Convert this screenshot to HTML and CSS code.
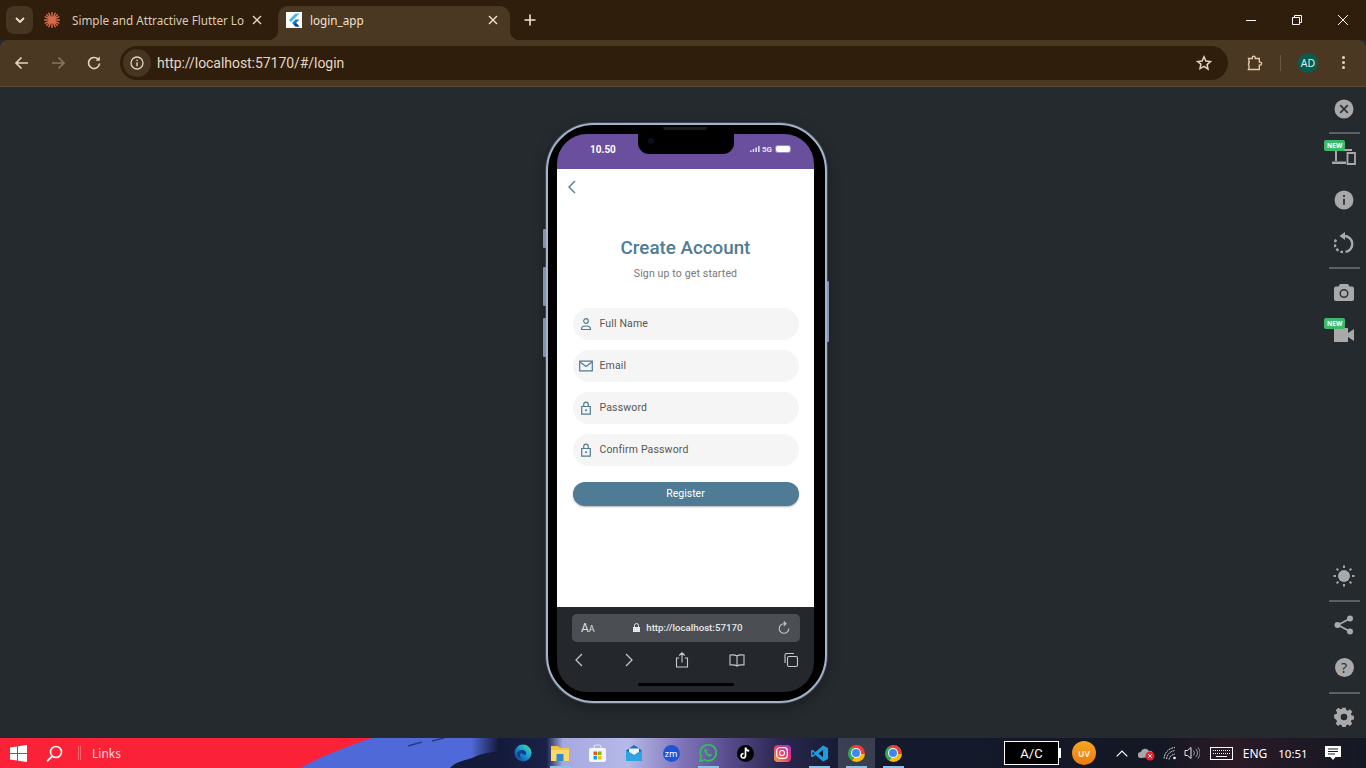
FILE: index.html
```html
<!DOCTYPE html>
<html lang="en">
<head>
    <meta charset="UTF-8">
    <meta name="viewport" content="width=device-width, initial-scale=1.0">
    <title>login_app</title>
    <link rel="stylesheet" href="styles.css">
</head>
<body>
    <!-- browser chrome -->
    <div class="tabstrip">
        <div class="tab-search">
            <svg width="10" height="6" viewBox="0 0 10 6"><path d="M1 1l4 4 4-4" fill="none" stroke="#f0e4d4" stroke-width="1.8"/></svg>
        </div>
        <div class="tab">
            <svg class="tab-icon" width="16" height="16" viewBox="0 0 16 16"><g stroke="#d9694a" stroke-width="1.4" stroke-linecap="round"><path d="M8 0.500v15M0.500 8h15M2.700 2.700l10.600 10.600M13.300 2.700L2.700 13.300M4.800 1.200l6.400 13.600M11.200 1.200L4.800 14.800M1.200 4.800l13.600 6.400M14.800 4.800L1.200 11.200"/></g></svg>
            <span class="tab-title">Simple and Attractive Flutter Lo</span>
            <span class="tab-close">
                <svg width="10" height="10" viewBox="0 0 10 10"><path d="M1 1l8 8M9 1L1 9" stroke="#e6d6c0" stroke-width="1.4"/></svg>
            </span>
        </div>
        <div class="tab tab-active">
            <span class="favicon">
                <svg width="16" height="16" viewBox="0 0 16 16"><path d="M9.500 1.500L3 8l2 2 8.500-8.500z" fill="#42b9f2"/><path d="M9.500 7.500L6 11l3.500 3.500h4L10 11l3.500-3.500z" fill="#1f74d2"/><path d="M8 12.500l1.500 2h4L10 11z" fill="#0b3f8f"/></svg>
            </span>
            <span class="tab-title">login_app</span>
            <span class="tab-close">
                <svg width="10" height="10" viewBox="0 0 10 10"><path d="M1 1l8 8M9 1L1 9" stroke="#f0e4d4" stroke-width="1.4"/></svg>
            </span>
        </div>
        <div class="new-tab">
            <svg width="12" height="12" viewBox="0 0 12 12"><path d="M6 0.500v11M0.500 6h11" stroke="#f0e4d4" stroke-width="1.600"/></svg>
        </div>
        <div class="win-controls">
            <span class="win-btn"><svg width="12" height="12" viewBox="0 0 12 12"><path d="M1 6.500h10" stroke="#fff" stroke-width="1"/></svg></span>
            <span class="win-btn"><svg width="12" height="12" viewBox="0 0 12 12"><path d="M1.500 3.500h7v7h-7zM3.500 3.500v-2h7v7h-2" fill="none" stroke="#fff" stroke-width="1"/></svg></span>
            <span class="win-btn"><svg width="12" height="12" viewBox="0 0 12 12"><path d="M1 1l10 10M11 1L1 11" stroke="#fff" stroke-width="1"/></svg></span>
        </div>
    </div>

    <div class="toolbar">
        <span class="nav-btn"><svg width="16" height="16" viewBox="0 0 16 16"><path d="M14 8H2.500M7.500 2.500L2 8l5.500 5.500" fill="none" stroke="#e3d3bd" stroke-width="1.700"/></svg></span>
        <span class="nav-btn"><svg width="16" height="16" viewBox="0 0 16 16"><path d="M2 8h11.500M8.500 2.500L14 8l-5.500 5.500" fill="none" stroke="#85755f" stroke-width="1.700"/></svg></span>
        <span class="nav-btn"><svg width="16" height="16" viewBox="0 0 16 16"><path d="M13.500 8.500A5.500 5.500 0 1 1 12 4.200" fill="none" stroke="#e3d3bd" stroke-width="1.700"/><path d="M13.800 1.500v4.300H9.500z" fill="#e3d3bd"/></svg></span>
        <div class="omnibox">
            <span class="site-info"><svg width="14" height="14" viewBox="0 0 14 14"><circle cx="7" cy="7" r="6" fill="none" stroke="#e3d3bd" stroke-width="1.300"/><path d="M7 6.200v4M7 3.700v1.300" stroke="#e3d3bd" stroke-width="1.400"/></svg></span>
            <span class="url">http://localhost:57170/#/login</span>
            <svg class="star" width="16" height="16" viewBox="0 0 16 16"><path d="M8 1.800l1.900 4.200 4.600.5-3.400 3.100.9 4.500L8 11.300l-4 2.300.9-4.500L1.500 6.500l4.600-.5z" fill="none" stroke="#e3d3bd" stroke-width="1.500"/></svg>
        </div>
        <span class="ext-btn"><svg width="16" height="16" viewBox="0 0 16 16"><path d="M1.500 3.500h3.800V2.700a1.500 1.500 0 0 1 3 0v.8h4v3.600h.8a1.500 1.500 0 0 1 0 3h-.8v4.400H1.500c.9-1.600.9-3.400 0-5 .9-2 .9-4 0-6z" fill="none" stroke="#e3c9a5" stroke-width="1.400"/></svg></span>
        <span class="toolbar-sep"></span>
        <span class="avatar">AD</span>
        <span class="menu-dots"><i></i><i></i><i></i></span>
    </div>

    <!-- emulator area -->
    <div class="workspace">
        <div class="stage">
            <div class="phone">
                <span class="side-btn btn-mute"></span>
                <span class="side-btn btn-up"></span>
                <span class="side-btn btn-down"></span>
                <span class="side-btn btn-power"></span>
                <span class="speaker"></span>
                <div class="screen">
                    <div class="notch"><span class="camera"></span></div>
                    <div class="statusbar">
                        <span class="clock">10.50</span>
                        <span class="status-right">
                            <svg width="10" height="6" viewBox="0 0 10 6"><path d="M0 4.500h1.500V6H0zM2.700 3h1.500v3H2.700zM5.400 1.500h1.500V6H5.400zM8.100 0h1.500v6H8.100z" fill="#e8e2f2"/></svg>
                            <span class="net">5G</span>
                            <span class="battery"></span>
                        </span>
                    </div>
                    <div class="app">
                        <svg class="back" width="10" height="14" viewBox="0 0 10 14"><path d="M8 1L2 7l6 6" fill="none" stroke="#4f7c94" stroke-width="1.400"/></svg>
                        <h1>Create Account</h1>
                        <p class="subtitle">Sign up to get started</p>
                        <div class="field">
                            <svg width="14" height="14" viewBox="0 0 14 14"><circle cx="7" cy="4" r="2.300" fill="none" stroke="#4f7c94" stroke-width="1.200"/><path d="M2.600 12.500v-1.200c0-1.300 2.200-2.300 4.400-2.300s4.400 1 4.400 2.300v1.200z" fill="none" stroke="#4f7c94" stroke-width="1.200"/></svg>
                            <span>Full Name</span>
                        </div>
                        <div class="field">
                            <svg width="14" height="14" viewBox="0 0 14 14"><path d="M0.700 2.200h12.600v9.600H0.700z" fill="none" stroke="#4f7c94" stroke-width="1.200"/><path d="M1 3l6 4.500L13 3" fill="none" stroke="#4f7c94" stroke-width="1.200"/></svg>
                            <span>Email</span>
                        </div>
                        <div class="field">
                            <svg width="14" height="14" viewBox="0 0 14 14"><path d="M2.700 5.500h8.600v7.700H2.700zM4.700 5.500V3.500a2.300 2.300 0 0 1 4.600 0v2" fill="none" stroke="#4f7c94" stroke-width="1.200"/><circle cx="7" cy="9.300" r="1" fill="#4f7c94"/></svg>
                            <span>Password</span>
                        </div>
                        <div class="field">
                            <svg width="14" height="14" viewBox="0 0 14 14"><path d="M2.700 5.500h8.600v7.700H2.700zM4.700 5.500V3.500a2.300 2.300 0 0 1 4.600 0v2" fill="none" stroke="#4f7c94" stroke-width="1.200"/><circle cx="7" cy="9.300" r="1" fill="#4f7c94"/></svg>
                            <span>Confirm Password</span>
                        </div>
                        <button class="register">Register</button>
                    </div>
                    <div class="safari">
                        <div class="safari-url">
                            <span class="aa">A<small>A</small></span>
                            <span class="safari-addr">
                                <svg width="7" height="9" viewBox="0 0 7 9"><path d="M0 4h7v5H0z" fill="#e6e6e6"/><path d="M1.500 4V2.500a2 2 0 0 1 4 0V4" fill="none" stroke="#e6e6e6" stroke-width="1"/></svg>
                                http://localhost:57170
                            </span>
                            <svg width="14" height="14" viewBox="0 0 14 14"><path d="M11.800 7.500A4.800 4.800 0 1 1 7 2.700h1.500M6.800 0.500L9 2.700 6.800 4.900" fill="none" stroke="#c8c9cb" stroke-width="1.100"/></svg>
                        </div>
                        <div class="safari-nav">
                            <svg width="16" height="16" viewBox="0 0 16 16"><path d="M11 2L5 8l6 6" fill="none" stroke="#c8c9cb" stroke-width="1.200"/></svg>
                            <svg width="16" height="16" viewBox="0 0 16 16"><path d="M5 2l6 6-6 6" fill="none" stroke="#c8c9cb" stroke-width="1.200"/></svg>
                            <svg width="16" height="16" viewBox="0 0 16 16"><path d="M5.200 6H2.500v9h11V6h-2.700M8 10.500V1M5.200 3.500L8 0.800l2.800 2.700" fill="none" stroke="#c8c9cb" stroke-width="1.100"/></svg>
                            <svg width="16" height="16" viewBox="0 0 16 16"><path d="M8 4C6.500 2.800 3.500 2.700 1 3v10c2.500-.3 5.500-.2 7 1 1.500-1.200 4.500-1.300 7-1V3C12.500 2.700 9.500 2.800 8 4zM8 4v10" fill="none" stroke="#c8c9cb" stroke-width="1.100"/></svg>
                            <svg width="16" height="16" viewBox="0 0 16 16"><rect x="4.500" y="4.500" width="10" height="10" rx="1.500" fill="none" stroke="#c8c9cb" stroke-width="1.100"/><path d="M2 11V3a1.500 1.500 0 0 1 1.500-1.500H11" fill="none" stroke="#c8c9cb" stroke-width="1.100"/></svg>
                        </div>
                        <span class="home-bar"></span>
                    </div>
                </div>
            </div>
        </div>

        <div class="rail">
            <div class="rail-group">
                <span class="rail-btn rail-close"><svg width="20" height="20" viewBox="0 0 20 20"><circle cx="10" cy="10" r="9.500" fill="#a9a9a9"/><path d="M6.200 6.200l7.600 7.600M13.800 6.200l-7.600 7.600" stroke="#2e3337" stroke-width="1.700"/></svg></span>
                <span class="rail-sep"></span>
                <span class="rail-btn">
                    <span class="badge">NEW</span>
                    <svg width="24" height="18" viewBox="0 0 24 18"><path d="M3 1h17v2H5v10H3zM0 13.500h14V16H0z" fill="#a9a9a9"/><path d="M15.500 5h7.500v11h-7.500z" fill="none" stroke="#a9a9a9" stroke-width="1.800"/></svg>
                </span>
                <span class="rail-btn"><svg width="20" height="20" viewBox="0 0 20 20"><circle cx="10" cy="10" r="9.500" fill="#a9a9a9"/><path d="M10 8.800v6M10 5v2" stroke="#2e3337" stroke-width="1.800"/></svg></span>
                <span class="rail-btn"><svg width="20" height="22" viewBox="0 0 20 22"><path d="M10 4a8 8 0 0 1 1.500 15.900" fill="none" stroke="#a9a9a9" stroke-width="2.400"/><path d="M9 20A8 8 0 0 1 3 6.500" fill="none" stroke="#a9a9a9" stroke-width="2.400" stroke-dasharray="2.600 2.200"/><path d="M11 0L5.500 4 11 8z" fill="#a9a9a9"/></svg></span>
                <span class="rail-sep"></span>
                <span class="rail-btn"><svg width="20" height="18" viewBox="0 0 20 18"><path d="M6 1h8l1.500 2.500H18a2 2 0 0 1 2 2V16a2 2 0 0 1-2 2H2a2 2 0 0 1-2-2V5.500a2 2 0 0 1 2-2h2.500z" fill="#a9a9a9"/><circle cx="10" cy="10.500" r="3.800" fill="none" stroke="#2e3337" stroke-width="1.500"/></svg></span>
                <span class="rail-btn">
                    <span class="badge">NEW</span>
                    <svg width="20" height="14" viewBox="0 0 20 14"><path d="M0 0h14v14H0zM14 5l6-4v12l-6-4z" fill="#a9a9a9"/></svg>
                </span>
            </div>
            <div class="rail-group">
                <span class="rail-btn"><svg width="22" height="22" viewBox="0 0 22 22"><circle cx="11" cy="11" r="6" fill="#a9a9a9"/><path d="M11 0.500v2.500M11 19v2.500M0.500 11H3M19 11h2.500M3.600 3.600l1.700 1.700M16.700 16.700l1.700 1.700M18.400 3.600l-1.700 1.700M5.300 16.700l-1.700 1.700" stroke="#a9a9a9" stroke-width="2"/></svg></span>
                <span class="rail-sep"></span>
                <span class="rail-btn"><svg width="20" height="20" viewBox="0 0 20 20"><path d="M16 3.500L4 10l12 6.500" fill="none" stroke="#a9a9a9" stroke-width="1.800"/><circle cx="16" cy="3.500" r="3" fill="#a9a9a9"/><circle cx="16" cy="16.500" r="3" fill="#a9a9a9"/><circle cx="3.500" cy="10" r="3" fill="#a9a9a9"/></svg></span>
                <span class="rail-btn rail-help"><span>?</span></span>
                <span class="rail-sep"></span>
                <span class="rail-btn"><svg width="20" height="20" viewBox="0 0 20 20"><path d="M8 0.500h4l.5 2.700 1.700.7 2.300-1.600 2.800 2.800-1.600 2.300.7 1.700 2.600.5v4l-2.700.5-.7 1.700 1.600 2.300-2.800 2.800-2.300-1.600-1.700.7-.5 2.700H8l-.5-2.700-1.700-.7-2.300 1.600-2.800-2.800 1.600-2.300-.7-1.700L-1 12V8l2.700-.5.7-1.700L.8 3.500l2.800-2.800 2.300 1.600 1.700-.7z" transform="translate(1 0.200) scale(.9)" fill="#a9a9a9"/><circle cx="10" cy="10" r="3.300" fill="#252a2f"/></svg></span>
            </div>
        </div>
    </div>

    <!-- windows taskbar -->
    <div class="taskbar">
        <svg class="wallpaper" width="1366" height="30" viewBox="0 0 1366 30">
            <defs>
                <linearGradient id="wall" x1="0" x2="1" y1="0" y2="0">
                    <stop offset="0" stop-color="#fb2238"/>
                    <stop offset="0.2" stop-color="#fb2238"/>
                    <stop offset="0.21" stop-color="#5069d8"/>
                    <stop offset="0.345" stop-color="#5069d8"/>
                    <stop offset="0.365" stop-color="#131a3a"/>
                    <stop offset="0.4" stop-color="#1a2148"/>
                    <stop offset="0.412" stop-color="#a5a9e0"/>
                    <stop offset="0.46" stop-color="#b5b8e8"/>
                    <stop offset="0.5" stop-color="#7f73b8"/>
                    <stop offset="0.53" stop-color="#5c4f92"/>
                    <stop offset="0.57" stop-color="#2b2750"/>
                    <stop offset="0.62" stop-color="#141a30"/>
                    <stop offset="0.85" stop-color="#141824"/>
                    <stop offset="0.9" stop-color="#2a1a26"/>
                    <stop offset="1" stop-color="#141824"/>
                </linearGradient>
            </defs>
            <rect width="1366" height="30" fill="url(#wall)"/>
            <path d="M0 0h372C345 9 320 19 300 30H0z" fill="#fb2238"/>
            <path d="M450 30c5-6 15-8 22-10 8-4 14-5 28-7v17z" fill="#131a3a"/>
            <path d="M408 8l14-4M432 3l12-3" stroke="#2c3a80" stroke-width="1.500"/>
        </svg>
        <div class="tb-left">
            <span class="tb-start"><svg width="17" height="17" viewBox="0 0 17 17"><path d="M0 2.500l7-1V8H0zM8 1.300L17 0v8H8zM0 9h7v6.500l-7-1zM8 9h9v8l-9-1.300z" fill="#fff"/></svg></span>
            <span class="tb-search"><svg width="17" height="17" viewBox="0 0 17 17"><circle cx="10" cy="7" r="5.500" fill="none" stroke="#fff" stroke-width="1.600"/><path d="M6 11.500L1 16.300" stroke="#fff" stroke-width="1.800"/></svg></span>
            <span class="tb-sep"></span>
            <span class="tb-links">Links</span>
        </div>
        <div class="tb-apps">
            <span class="app-slot"><svg width="18" height="18" viewBox="0 0 18 18"><defs><linearGradient id="edge" x1="0" y1="1" x2="1" y2="0"><stop offset="0.2" stop-color="#0f5aa8"/><stop offset="0.6" stop-color="#1ba6d8"/><stop offset="1" stop-color="#5adf7c"/></linearGradient></defs><circle cx="9" cy="9" r="8.500" fill="url(#edge)"/><path d="M3 9.500C3.500 6.500 6.500 5.500 9 6c2.500.5 3.800 2.500 3 4.500-1.500.8-3.500.3-3.500-1C6 8.500 5 11 7 14c-2.500-.5-4.300-2.200-4-4.500z" fill="#0c3f86"/></svg></span>
            <span class="app-slot app-open"><svg width="18" height="16" viewBox="0 0 18 16"><path d="M0 1h7l2 2h9v13H0z" fill="#f5c242"/><path d="M0 5h18v11H0z" fill="#ffd968"/><path d="M5.500 9h7v7h-7z" fill="#2a8ad4"/></svg></span>
            <span class="app-slot"><svg width="17" height="18" viewBox="0 0 17 18"><path d="M5 4V2.500A2 2 0 0 1 7 1h3a2 2 0 0 1 2 1.500V4" fill="none" stroke="#e5e5e5" stroke-width="1.200"/><rect y="4" width="17" height="14" rx="2" fill="#f5f5f5"/><path d="M4.500 7.500h3.500V11H4.500z" fill="#f25022"/><path d="M9 7.500h3.500V11H9z" fill="#7fba00"/><path d="M4.500 12h3.500v3.500H4.500z" fill="#00a4ef"/><path d="M9 12h3.500v3.500H9z" fill="#ffb900"/></svg></span>
            <span class="app-slot"><svg width="16" height="16" viewBox="0 0 16 16"><path d="M0 5.500L8 0l8 5.500V16H0z" fill="#1a6fb5"/><path d="M0 5.500l8 5 8-5V16H0z" fill="#30a4e0"/><path d="M3 3.500h10v3.500l-5 3-5-3z" fill="#eaf4fb"/></svg></span>
            <span class="app-slot"><span class="zoom-ic">zm</span></span>
            <span class="app-slot app-open"><svg width="18" height="18" viewBox="0 0 18 18"><path d="M1 17l1.200-4.500A8 8 0 1 1 5.500 15.800z" fill="none" stroke="#2fc25b" stroke-width="1.700"/><path d="M6 5c-1 1-.8 2.800.6 4.700 1.500 2 3.500 3.200 5 2.700.8-.3 1.200-1 1.300-1.600l-2-1.100-1 .9c-1-.4-2-1.500-2.500-2.600l.8-1L7.300 5z" fill="#2fc25b"/></svg></span>
            <span class="app-slot"><span class="tiktok-ic"><svg width="12" height="13" viewBox="0 0 12 13"><path d="M6.500 0.500v8.300a2.200 2.200 0 1 1-2-2.200M6.500 0.500c.3 2 1.700 3.200 3.700 3.400" fill="none" stroke="#fff" stroke-width="1.700"/></svg></span></span>
            <span class="app-slot"><span class="insta-ic"><svg width="12" height="12" viewBox="0 0 12 12"><rect x="0.700" y="0.700" width="10.600" height="10.600" rx="3" fill="none" stroke="#fff" stroke-width="1.200"/><circle cx="6" cy="6" r="2.500" fill="none" stroke="#fff" stroke-width="1.200"/></svg></span></span>
            <span class="app-slot app-open"><svg width="17" height="17" viewBox="0 0 17 17"><path d="M12 0.500L17 3v11l-5 2.500L4.500 10 1.500 12.300 0 11.500V5.500L1.500 4.700 4.500 7z" fill="#1f9ce0"/><path d="M12 4.700L7.500 8.500l4.500 3.800z" fill="#10192a"/><path d="M1.500 6.500v4l2-2z" fill="#10192a"/></svg></span>
            <span class="app-slot app-open app-active"><span class="chrome-ic"><i></i></span></span>
            <span class="app-slot app-open"><span class="chrome-ic"><i></i></span></span>
        </div>
        <div class="tray">
            <span class="ac-box">A/C</span>
            <span class="uv">UV</span>
            <span class="tray-slot tray-chevron"><svg width="12" height="7" viewBox="0 0 12 7"><path d="M0.700 6.300L6 1l5.300 5.300" fill="none" stroke="#fff" stroke-width="1.200"/></svg></span>
            <span class="tray-slot"><svg width="17" height="15" viewBox="0 0 17 15"><path d="M3 12a3 3 0 0 1-.3-6A4.500 4.500 0 0 1 11 5a3 3 0 0 1 2 6z" fill="#a7a7ab"/><circle cx="12" cy="10" r="4.500" fill="#e81f2d"/><path d="M10.200 8.200l3.600 3.600M13.800 8.200l-3.600 3.600" stroke="#fff" stroke-width="1"/></svg></span>
            <span class="tray-slot tray-wifi"><svg width="14" height="14" viewBox="0 0 14 14"><path d="M1 12.500C1.500 6.500 6 2 12 1.500M3.500 13C4 8.500 7.500 5 12 4.500M6 13.500C6.500 11 8.500 8.500 12 8" fill="none" stroke="#c9cad0" stroke-width="1" stroke-dasharray="2 .6"/><circle cx="11.500" cy="12" r="1.300" fill="#fff"/></svg></span>
            <span class="tray-slot tray-vol"><svg width="16" height="14" viewBox="0 0 16 14"><path d="M1 4.500h2.500L7 1.500v11L3.500 9.500H1z" fill="none" stroke="#e4e4e6" stroke-width="1"/><path d="M9.500 4.500a4 4 0 0 1 0 5M12 3a6.500 6.500 0 0 1 0 8M14 1.500a9 9 0 0 1 0 11" fill="none" stroke="#8f8f95" stroke-width="1"/></svg></span>
            <span class="tray-slot tray-kbd"><svg width="23" height="13" viewBox="0 0 23 13"><rect x="0.500" y="0.500" width="22" height="12" fill="none" stroke="#fff"/><path d="M3 3.500h17M3 6.500h17" stroke="#fff" stroke-dasharray="1 1"/><path d="M6 9.500h11" stroke="#fff"/></svg></span>
            <span class="tray-slot tray-eng">ENG</span>
            <span class="tray-slot tray-time">10:51</span>
            <span class="tray-slot tray-notif"><svg width="16" height="16" viewBox="0 0 16 16"><path d="M0 1h16v11h-5.500L8 15l-2.500-3H0z" fill="#fff"/><path d="M3 4h10M3 6.500h10M3 9h7" stroke="#141824" stroke-width="1"/></svg></span>
        </div>
    </div>
</body>
</html>
```

FILE: styles.css
```css
* {
    box-sizing: border-box;
}

body {
    display: flex;
    flex-direction: column;
    margin: 0;
    height: 100vh;
    overflow: hidden;
    font-family: "Noto Sans", Arial, sans-serif;
    background-color: #252a2f;
}

/* tabs */
.tabstrip {
    display: flex;
    align-items: flex-end;
    height: 40px;
    padding-left: 6px;
    background-color: #2f1e0c;
    color: #dccbb5;
    font-size: 11.700px;
}

.tab-search {
    display: flex;
    align-items: center;
    justify-content: center;
    align-self: flex-start;
    width: 27px;
    height: 28px;
    margin-top: 6px;
    border-radius: 8px;
    background-color: #463521;
}

.tab {
    display: flex;
    align-items: center;
    position: relative;
    width: 232px;
    height: 34px;
    padding: 0 8px 6px;
    margin-left: 3px;
}

.tab-icon {
    flex: none;
    margin-right: 12px;
}

.tab-title {
    flex: 1;
    white-space: nowrap;
}

.tab-close {
    display: flex;
    margin-left: 8px;
}

.tab-active {
    margin-left: 10px;
    padding-right: 12px;
    border-radius: 10px 10px 0 0;
    background-color: #4a3822;
    color: #f0e4d4;
}

.tab-active::before,
.tab-active::after {
    content: "";
    position: absolute;
    bottom: 0;
    width: 10px;
    height: 10px;
}

.tab-active::before {
    left: -10px;
    background: radial-gradient(circle at 0 0, transparent 10px, #4a3822 10.5px);
}

.tab-active::after {
    right: -10px;
    background: radial-gradient(circle at 100% 0, transparent 10px, #4a3822 10.5px);
}

.favicon {
    display: flex;
    flex: none;
    width: 16px;
    height: 16px;
    margin-right: 8px;
    background-color: #fff;
}

.new-tab {
    display: flex;
    align-self: center;
    margin-left: 14px;
}

.win-controls {
    display: flex;
    align-self: flex-start;
    margin-left: auto;
}

.win-btn {
    display: flex;
    align-items: center;
    justify-content: center;
    width: 46px;
    height: 40px;
}

/* address bar */
.toolbar {
    display: flex;
    align-items: center;
    height: 47px;
    padding: 0 8px 1px 4px;
    border-bottom: 1px solid #5a4a34;
    border-radius: 8px 8px 0 0;
    background-color: #4a3822;
}

.nav-btn {
    display: flex;
    justify-content: center;
    width: 36px;
}

.omnibox {
    display: flex;
    align-items: center;
    height: 34px;
    width: 1108px;
    margin-left: 8px;
    padding: 0 16px 0 3px;
    border-radius: 17px;
    background-color: #2f1e0c;
}

.site-info {
    display: flex;
    align-items: center;
    justify-content: center;
    width: 28px;
    height: 28px;
    border-radius: 50%;
    background-color: #463521;
}

.url {
    margin-left: 6px;
    color: #e3d6c4;
    font-family: Roboto, Arial, sans-serif;
    font-size: 14px;
    letter-spacing: -0.05px;
}

.star {
    margin-left: auto;
}

.ext-btn {
    display: flex;
    margin-left: 19px;
}

.toolbar-sep {
    width: 1px;
    height: 16px;
    margin-left: 17px;
    background-color: #6c5a42;
}

.avatar {
    display: flex;
    align-items: center;
    justify-content: center;
    width: 20px;
    height: 20px;
    margin-left: 17px;
    border-radius: 50%;
    background-color: #0b5b50;
    color: #d8efe8;
    font-size: 10.500px;
}

.menu-dots {
    display: flex;
    flex-direction: column;
    gap: 2px;
    margin-left: 24px;
}

.menu-dots i {
    width: 3px;
    height: 3px;
    border-radius: 50%;
    background-color: #e3d3bd;
}

/* emulator area */
.workspace {
    display: flex;
    flex: 1;
    min-height: 0;
}

.stage {
    display: flex;
    flex: 1;
    align-items: center;
    justify-content: center;
    padding-left: 51px;
}

.phone {
    position: relative;
    flex: none;
    width: 281px;
    height: 580px;
    padding: 9px 11px 9px 9px;
    border: 2px solid #a4b4c8;
    border-radius: 48px;
    background-color: #000;
    box-shadow: 0 0 0 1px #3d4854, 0 4px 14px rgba(0, 0, 0, 0.35);
}

.side-btn {
    position: absolute;
    width: 3px;
    border-radius: 1px;
    background-color: #8395ad;
}

.btn-mute {
    left: -5px;
    top: 104px;
    height: 19px;
}

.btn-up {
    left: -5px;
    top: 142px;
    height: 39px;
}

.btn-down {
    left: -5px;
    top: 193px;
    height: 39px;
}

.btn-power {
    right: -4px;
    top: 156px;
    width: 2px;
    height: 61px;
}

.speaker {
    position: absolute;
    left: 115px;
    top: 2px;
    width: 44px;
    height: 3px;
    border-radius: 0 0 3px 3px;
    background-color: #1a1d20;
}

.screen {
    position: relative;
    display: flex;
    flex-direction: column;
    height: 100%;
    overflow: hidden;
    border-radius: 30px;
}

.notch {
    position: absolute;
    left: 81px;
    top: 0;
    width: 96px;
    height: 20px;
    border-radius: 0 0 11px 11px;
    background-color: #000;
}

.camera {
    position: absolute;
    left: 10px;
    top: 4px;
    width: 6px;
    height: 6px;
    border-radius: 50%;
    background-color: #0a1020;
}

.statusbar {
    display: flex;
    flex: none;
    align-items: center;
    justify-content: space-between;
    height: 35px;
    padding: 0 24px 3px 33px;
    background-color: #6a4f9e;
    color: #fff;
}

.clock {
    font-family: Roboto, Arial, sans-serif;
    font-size: 10px;
    font-weight: 700;
}

.status-right {
    display: flex;
    align-items: center;
    gap: 2px;
    margin-bottom: 1px;
}

.net {
    color: #e8e2f2;
    font-family: Roboto, Arial, sans-serif;
    font-size: 8px;
    font-weight: 700;
}

.battery {
    width: 14px;
    height: 6px;
    margin-left: 2px;
    border-radius: 2px;
    background-color: #fff;
    box-shadow: 0 0 0 1px #9c8ac0;
}

.app {
    display: flex;
    flex: 1;
    flex-direction: column;
    align-items: center;
    padding: 11px 16px 0;
    background-color: #fff;
    font-family: Roboto, Arial, sans-serif;
}

.back {
    align-self: flex-start;
    margin-left: -6px;
}

h1 {
    margin: 42px 0 0;
    color: #4f7c94;
    font-size: 18.800px;
    font-weight: 500;
    line-height: 24px;
}

.subtitle {
    margin: 7px 0 0;
    color: #777;
    font-size: 10.500px;
    letter-spacing: 0.15px;
    line-height: 14px;
}

.field {
    display: flex;
    flex: none;
    align-items: center;
    gap: 7px;
    width: 226px;
    height: 32px;
    margin-top: 10px;
    padding-left: 6px;
    border-radius: 16px;
    background-color: #f5f5f5;
    color: #555;
    font-size: 10.500px;
    letter-spacing: 0.15px;
}

.subtitle + .field {
    margin-top: 27px;
}

.register {
    flex: none;
    width: 226px;
    height: 24px;
    margin-top: 16px;
    border: none;
    border-radius: 12px;
    background-color: #4f7c94;
    box-shadow: 0 1px 2px rgba(0, 0, 0, 0.3);
    color: #fff;
    font-family: Roboto, Arial, sans-serif;
    font-size: 10.500px;
}

/* fake safari bar */
.safari {
    position: relative;
    flex: none;
    height: 85px;
    padding: 7px 14px 0 15px;
    background-color: #24282d;
}

.safari-url {
    display: flex;
    align-items: center;
    justify-content: space-between;
    height: 28px;
    padding: 0 9px;
    border-radius: 5px;
    background-color: #4b4e53;
}

.aa {
    color: #dfe0e2;
    font-family: Roboto, Arial, sans-serif;
    font-size: 12px;
}

.aa small {
    font-size: 9px;
}

.safari-addr {
    display: flex;
    align-items: center;
    gap: 6px;
    margin-left: 4px;
    color: #e6e8ea;
    font-family: Roboto, Arial, sans-serif;
    font-size: 9.700px;
    font-weight: 500;
}

.safari-nav {
    display: grid;
    grid-template-columns: 50px 53px 55px 54px 16px;
    margin: 10px 0 0 -1px;
}

.home-bar {
    position: absolute;
    left: 81px;
    bottom: 6px;
    width: 96px;
    height: 3px;
    border-radius: 2px;
    background-color: #000;
}

/* right rail */
.rail {
    display: flex;
    flex: none;
    flex-direction: column;
    justify-content: space-between;
    width: 44px;
}

.rail-group {
    display: flex;
    flex-direction: column;
    align-items: center;
}

.rail-btn {
    position: relative;
    display: flex;
    align-items: center;
    justify-content: center;
    width: 100%;
    height: 43px;
}

.rail-close {
    height: 41px;
    margin-top: 1px;
}

.rail-sep {
    width: 31px;
    height: 2px;
    margin: 3px 0 1px;
    background-color: #5c6064;
}

.badge {
    position: absolute;
    left: 2px;
    top: 5px;
    height: 11px;
    padding: 0 3px;
    border-radius: 2px;
    background-color: #3cba6c;
    color: #fff;
    font-size: 6.500px;
    font-weight: 700;
    line-height: 11px;
}

.rail-help span {
    display: flex;
    align-items: center;
    justify-content: center;
    width: 19px;
    height: 19px;
    border-radius: 50%;
    background-color: #a9a9a9;
    color: #2e3337;
    font-size: 14px;
    line-height: 1;
}

/* taskbar */
.taskbar {
    position: relative;
    display: flex;
    flex: none;
    align-items: center;
    height: 30px;
    color: #fff;
}

.wallpaper {
    position: absolute;
    left: 0;
    top: 0;
}

.tb-left,
.tb-apps,
.tray {
    position: relative;
    display: flex;
    align-items: center;
    height: 100%;
}

.tb-left {
    flex: none;
    width: 504.500px;
}

.tb-start,
.tb-search {
    display: flex;
    align-items: center;
    justify-content: center;
    width: 36px;
}

.tb-sep {
    width: 3px;
    height: 14px;
    margin-left: 6px;
    border-left: 1px solid rgba(255, 255, 255, 0.3);
    border-right: 1px solid rgba(255, 255, 255, 0.3);
}

.tb-links {
    margin-left: 11px;
    color: #ffd9dc;
    font-size: 12px;
}

.app-slot {
    position: relative;
    display: flex;
    align-items: center;
    justify-content: center;
    width: 37px;
    height: 100%;
}

.app-open::after {
    content: "";
    position: absolute;
    left: 8px;
    right: 8px;
    bottom: 0;
    height: 2px;
    background-color: #8cc0e8;
}

.app-active {
    background-color: rgba(255, 255, 255, 0.16);
}

.zoom-ic {
    display: flex;
    align-items: center;
    justify-content: center;
    width: 17px;
    height: 17px;
    border-radius: 50%;
    background-color: #1c55d8;
    font-size: 9px;
}

.tiktok-ic {
    display: flex;
    align-items: center;
    justify-content: center;
    width: 17px;
    height: 17px;
    border-radius: 50%;
    background-color: #000;
}

.insta-ic {
    display: flex;
    align-items: center;
    justify-content: center;
    width: 17px;
    height: 17px;
    border-radius: 4px;
    background: linear-gradient(45deg, #f9a13a, #e8326e 55%, #9b3ad0);
}

.chrome-ic {
    display: flex;
    align-items: center;
    justify-content: center;
    width: 17px;
    height: 17px;
    border-radius: 50%;
    background: conic-gradient(from -30deg, #ea4335 0 120deg, #fbbc05 120deg 240deg, #34a853 240deg 360deg);
}

.chrome-ic i {
    width: 8px;
    height: 8px;
    border-radius: 50%;
    background-color: #4285f4;
    box-shadow: 0 0 0 1px #fff;
}

.tray {
    margin-left: auto;
    padding-right: 16px;
}

.ac-box {
    position: relative;
    width: 55px;
    height: 24px;
    border: 1px solid #fff;
    background-color: #000;
    font-family: Roboto, Arial, sans-serif;
    font-size: 13px;
    line-height: 23px;
    text-align: center;
}

.ac-box::after {
    content: "";
    position: absolute;
    right: -3px;
    top: 6px;
    width: 2px;
    height: 10px;
    background-color: #fff;
}

.uv {
    display: flex;
    align-items: center;
    justify-content: center;
    width: 24px;
    height: 24px;
    margin-left: 13px;
    border-radius: 50%;
    background: linear-gradient(#f5a623, #ee7a12);
    color: #fde9c8;
    font-size: 8.500px;
    font-weight: 700;
}

.tray-slot {
    display: flex;
    align-items: center;
    justify-content: center;
    width: 24px;
    font-size: 12px;
}

.tray-chevron {
    margin-left: 14px;
}

.tray-vol {
    width: 20px;
}

.tray-kbd {
    width: 38px;
}

.tray-eng {
    width: 30px;
}

.tray-time {
    width: 46px;
    font-size: 11.500px;
}

.tray-notif {
    width: 34px;
}
```
